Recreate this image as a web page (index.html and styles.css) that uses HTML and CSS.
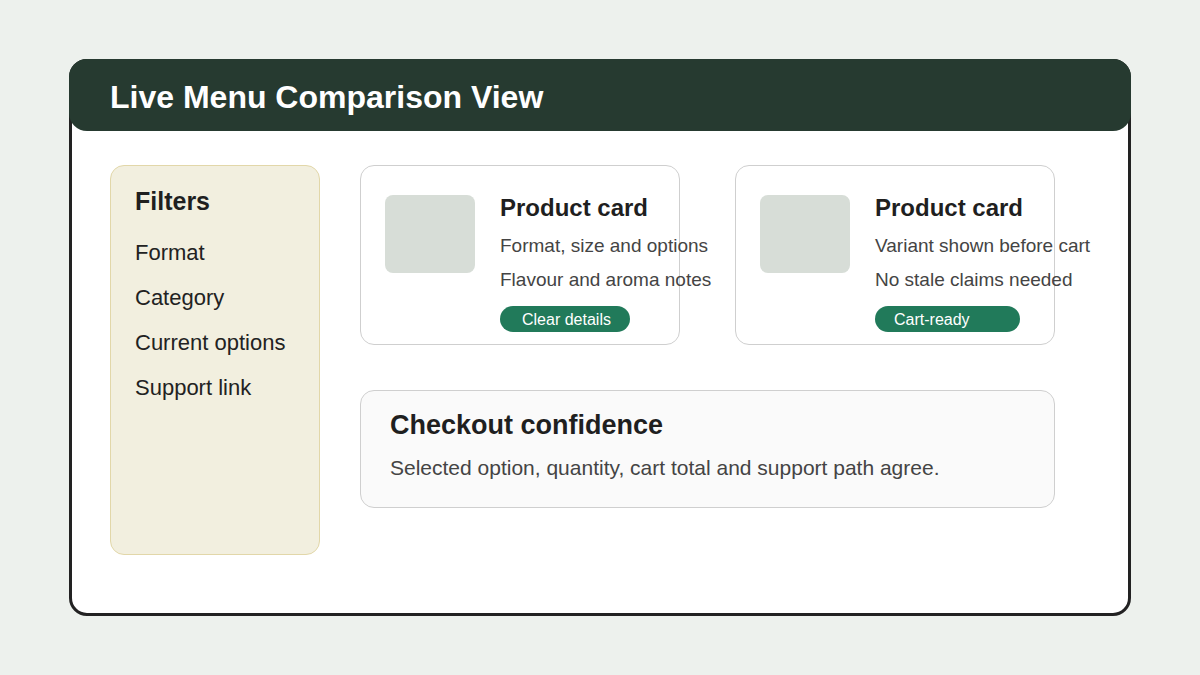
FILE: index.html
```html
<!DOCTYPE html>
<html lang="en">
<head>
    <meta charset="UTF-8">
    <meta name="viewport" content="width=device-width, initial-scale=1.0">
    <title>Live Menu Comparison View</title>
    <link rel="stylesheet" href="styles.css">
</head>
<body>

<div class="frame">
    <div class="frame-header">
        <h1>Live Menu Comparison View</h1>
    </div>

    <div class="frame-body">
        <div class="filters">
            <h2>Filters</h2>
            <div class="filter-item">Format</div>
            <div class="filter-item">Category</div>
            <div class="filter-item">Current options</div>
            <div class="filter-item">Support link</div>
        </div>

        <div class="main">
            <div class="cards">
                <div class="card">
                    <div class="thumb"></div>
                    <div class="card-text">
                        <h3>Product card</h3>
                        <p>Format, size and options</p>
                        <p>Flavour and aroma notes</p>
                        <span class="pill pill-clear">Clear details</span>
                    </div>
                </div>
                <div class="card">
                    <div class="thumb"></div>
                    <div class="card-text">
                        <h3>Product card</h3>
                        <p>Variant shown before cart</p>
                        <p>No stale claims needed</p>
                        <span class="pill pill-cart">Cart-ready</span>
                    </div>
                </div>
            </div>

            <div class="checkout">
                <h3>Checkout confidence</h3>
                <p>Selected option, quantity, cart total and support path agree.</p>
            </div>
        </div>
    </div>
</div>

</body>
</html>
```

FILE: styles.css
```css
body {
    font-family: 'Liberation Sans', Arial, sans-serif;
    background-color: #edf1ed;
    margin: 0;
    height: 675px;
    overflow: hidden;
}
.frame {
    box-sizing: border-box;
    width: 1062px;
    height: 557px;
    margin: 59px auto 0;
    border: 3px solid #222;
    border-radius: 18px;
    background-color: #fff;
}
.frame-header {
    box-sizing: border-box;
    height: 72px;
    margin: -3px -3px 0;
    padding: 4px 0 0 41px;
    background-color: #263a30;
    border-radius: 18px;
    display: flex;
    align-items: center;
}
.frame-header h1 {
    margin: 0;
    font-size: 32px;
    font-weight: bold;
    color: #fff;
}
.frame-body {
    display: flex;
    gap: 40px;
    padding: 34px 0 0 38px;
}
.filters {
    box-sizing: border-box;
    width: 210px;
    height: 390px;
    padding: 21px 24px;
    background-color: #f2efdf;
    border: 1px solid #e2d7a9;
    border-radius: 14px;
}
.filters h2 {
    margin: 0 0 26px;
    font-size: 25px;
    line-height: 28px;
    color: #1f1f1f;
}
.filter-item {
    font-size: 22px;
    line-height: 24px;
    color: #222;
    margin-bottom: 21px;
}
.main {
    display: flex;
    flex-direction: column;
    gap: 45px;
}
.cards {
    display: flex;
    gap: 55px;
}
.card {
    box-sizing: border-box;
    width: 320px;
    height: 180px;
    padding: 29px 24px;
    border: 1px solid #cfcfcf;
    border-radius: 14px;
    display: flex;
    gap: 25px;
    background-color: #fff;
}
.thumb {
    flex: none;
    width: 90px;
    height: 78px;
    background-color: #d7ddd7;
    border-radius: 8px;
}
.card-text {
    white-space: nowrap;
}
.card-text h3 {
    margin: 0;
    font-size: 24px;
    line-height: 25px;
    color: #1f1f1f;
}
.card-text p {
    margin: 15px 0 0;
    font-size: 19px;
    line-height: 22px;
    color: #444;
}
.card-text p + p {
    margin-top: 12px;
}
.pill {
    display: inline-block;
    margin-top: 15px;
    height: 26px;
    line-height: 27px;
    padding-left: 22px;
    box-sizing: border-box;
    font-size: 16px;
    color: #fff;
    background-color: #217a5a;
    border-radius: 13px;
}
.pill-clear {
    width: 130px;
}
.pill-cart {
    width: 145px;
    padding-left: 19px;
}
.checkout {
    box-sizing: border-box;
    width: 695px;
    height: 118px;
    padding: 18px 29px;
    background-color: #fafafa;
    border: 1px solid #cfcfcf;
    border-radius: 14px;
}
.checkout h3 {
    margin: 0;
    font-size: 27px;
    line-height: 32px;
    color: #1f1f1f;
}
.checkout p {
    margin: 15px 0 0;
    font-size: 21px;
    line-height: 24px;
    color: #444;
}
```
